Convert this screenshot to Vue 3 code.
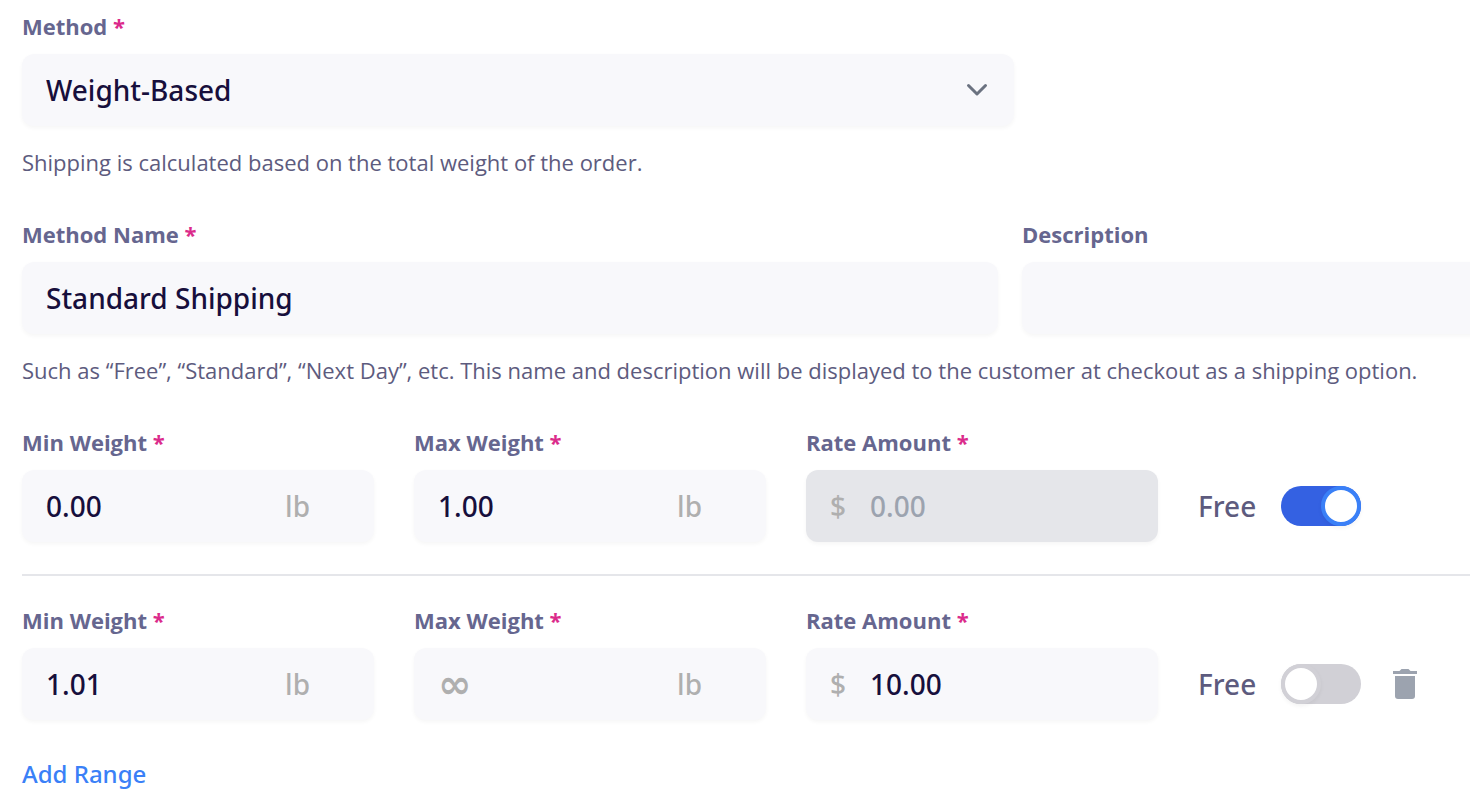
<script setup>
import { ref } from 'vue'

const method = ref('Weight-Based')
const name = ref('Standard Shipping')
const description = ref('')
const ranges = ref([
  { id: 1, min: '0.00', max: '1.00', rate: '', free: true },
  { id: 2, min: '1.01', max: '', rate: '10.00', free: false }
])
let nextId = 3

function addRange() {
  ranges.value.push({ id: nextId++, min: '', max: '', rate: '', free: false })
}

function removeRange(id) {
  ranges.value = ranges.value.filter((range) => range.id !== id)
}
</script>

<template>
  <form class="form" @submit.prevent>
    <section class="section">
      <div class="method">
        <label class="label" for="method">Method <span class="required">*</span></label>
        <div class="field">
          <select id="method" v-model="method" class="control">
            <option>Weight-Based</option>
            <option>Flat Rate</option>
          </select>
          <svg class="chevron" viewBox="0 0 24 16" aria-hidden="true">
            <path d="M3.5 3.5 12 12 20.500 3.500" />
          </svg>
        </div>
      </div>
      <p class="help">Shipping is calculated based on the total weight of the order.</p>
    </section>

    <section class="section">
      <div class="names">
        <div>
          <label class="label" for="name">Method Name <span class="required">*</span></label>
          <div class="field">
            <input id="name" v-model="name" class="control" type="text" />
          </div>
        </div>
        <div class="description">
          <label class="label" for="description">Description</label>
          <div class="field">
            <input id="description" v-model="description" class="control" type="text" />
          </div>
        </div>
      </div>
      <p class="help">
        Such as “Free”, “Standard”, “Next Day”, etc. This name and description will be displayed to the customer at checkout as a shipping option.
      </p>
    </section>

    <div v-for="(range, index) in ranges" :key="range.id" class="range">
      <div>
        <label class="label" :for="`min-${range.id}`">Min Weight <span class="required">*</span></label>
        <div class="field">
          <input :id="`min-${range.id}`" v-model="range.min" class="control" type="text" />
          <span class="unit">lb</span>
        </div>
      </div>
      <div>
        <label class="label" :for="`max-${range.id}`">Max Weight <span class="required">*</span></label>
        <div class="field">
          <input :id="`max-${range.id}`" v-model="range.max" class="control unlimited" type="text" placeholder="∞" />
          <span class="unit">lb</span>
        </div>
      </div>
      <div>
        <label class="label" :for="`rate-${range.id}`">Rate Amount <span class="required">*</span></label>
        <div class="field" :class="{ disabled: range.free }">
          <span class="currency">$</span>
          <input
            :id="`rate-${range.id}`"
            v-model="range.rate"
            class="control"
            type="text"
            placeholder="0.00"
            :disabled="range.free"
          />
        </div>
      </div>
      <div class="actions">
        <label class="free" :for="`free-${range.id}`">Free</label>
        <input :id="`free-${range.id}`" v-model="range.free" class="toggle" type="checkbox" role="switch" />
        <button v-if="index > 0" class="remove" type="button" aria-label="Remove range" @click="removeRange(range.id)">
          <svg viewBox="0 0 24 30" aria-hidden="true">
            <path d="M0 2h6.500L8.500 0h7l2 2H24v3H0z" />
            <path d="M2 7h20v20a3 3 0 0 1-3 3H5a3 3 0 0 1-3-3z" />
          </svg>
        </button>
      </div>
    </div>

    <button class="add" type="button" @click="addRange">Add Range</button>
  </form>
</template>

<style>
body {
  background: #fff;
  overflow-x: hidden;
}
</style>

<style scoped>
.form {
  padding: 11px 0 0 22px;
  font-family: "Open Sans", "Noto Sans", sans-serif;
  color: #5d5b7e;
}

.section {
  margin-bottom: 42px;
}

.method {
  width: 68.5%;
}

.names {
  display: grid;
  grid-template-columns: 61fr 28fr;
  gap: 24px;
}

.description {
  margin-right: -24px;
}

.label {
  display: block;
  margin-bottom: 13px;
  font-size: 22px;
  line-height: 30px;
  font-weight: 700;
  color: #66668f;
}

.required {
  color: #db2b8b;
}

.field {
  display: flex;
  align-items: center;
  position: relative;
  height: 72px;
  border-radius: 12px;
  background: #f8f8fb;
  box-shadow: 0 2px 4px rgba(0, 0, 0, 0.04);
}

.field.disabled {
  background: #e5e6ea;
}

.control {
  appearance: none;
  flex: 1;
  width: 100%;
  min-width: 0;
  height: 100%;
  margin: 0;
  padding: 0 24px;
  border: 0;
  border-radius: 12px;
  background: transparent;
  font-family: "Noto Sans", sans-serif;
  font-size: 28px;
  font-weight: 500;
  color: #170f3c;
}

.control:focus-visible {
  outline: 2px solid #3a80f7;
}

.control::placeholder {
  color: #afafaf;
  opacity: 1;
}

.unlimited:placeholder-shown {
  font-family: "DejaVu Sans", sans-serif;
  font-size: 40px;
  font-weight: 700;
}

.control:disabled::placeholder {
  color: #9ca3af;
}

.unit,
.currency {
  font-family: "Noto Sans", sans-serif;
  font-size: 28px;
  line-height: 40px;
  font-weight: 500;
  color: #afafaf;
}

.unit {
  padding-right: 64px;
}

.currency {
  padding-left: 24px;
}

.chevron {
  position: absolute;
  right: 25px;
  width: 24px;
  height: 16px;
  fill: none;
  stroke: #6b7280;
  stroke-width: 3;
  stroke-linecap: round;
  stroke-linejoin: round;
  pointer-events: none;
}

.help {
  margin: 21px 0 0;
  font-size: 22px;
  line-height: 30px;
}

.range {
  display: grid;
  grid-template-columns: 22fr 22fr 22fr 17fr;
  gap: 40px;
}

.range + .range {
  margin-top: 32px;
  padding-top: 29px;
  border-top: 2px solid #e5e6ea;
}

.actions {
  display: flex;
  align-items: center;
  align-self: end;
  height: 72px;
}

.free {
  margin-right: 25px;
  font-family: "Noto Sans", sans-serif;
  font-size: 28px;
  line-height: 40px;
  font-weight: 500;
}

.toggle {
  appearance: none;
  flex: none;
  width: 80px;
  height: 40px;
  margin: 0;
  border-radius: 20px;
  background: #d1d0d6;
  cursor: pointer;
}

.toggle::before {
  content: "";
  display: block;
  box-sizing: border-box;
  width: 40px;
  height: 40px;
  border: 4px solid #d1d0d6;
  border-radius: 50%;
  background: #fff;
  box-shadow: 0 2px 4px rgba(0, 0, 0, 0.05);
}

.toggle:checked {
  background: #3461e2;
}

.toggle:checked::before {
  margin-left: 40px;
  border-color: #3a80f7;
}

.remove {
  display: flex;
  margin-left: 32px;
  padding: 0;
  border: 0;
  background: none;
  cursor: pointer;
}

.remove svg {
  width: 24px;
  height: 30px;
  fill: #9ca3af;
}

.add {
  margin-top: 38px;
  padding: 0;
  border: 0;
  background: none;
  font-family: "Noto Sans", sans-serif;
  font-size: 24px;
  line-height: 32px;
  font-weight: 500;
  color: #3a80f7;
  cursor: pointer;
}
</style>
